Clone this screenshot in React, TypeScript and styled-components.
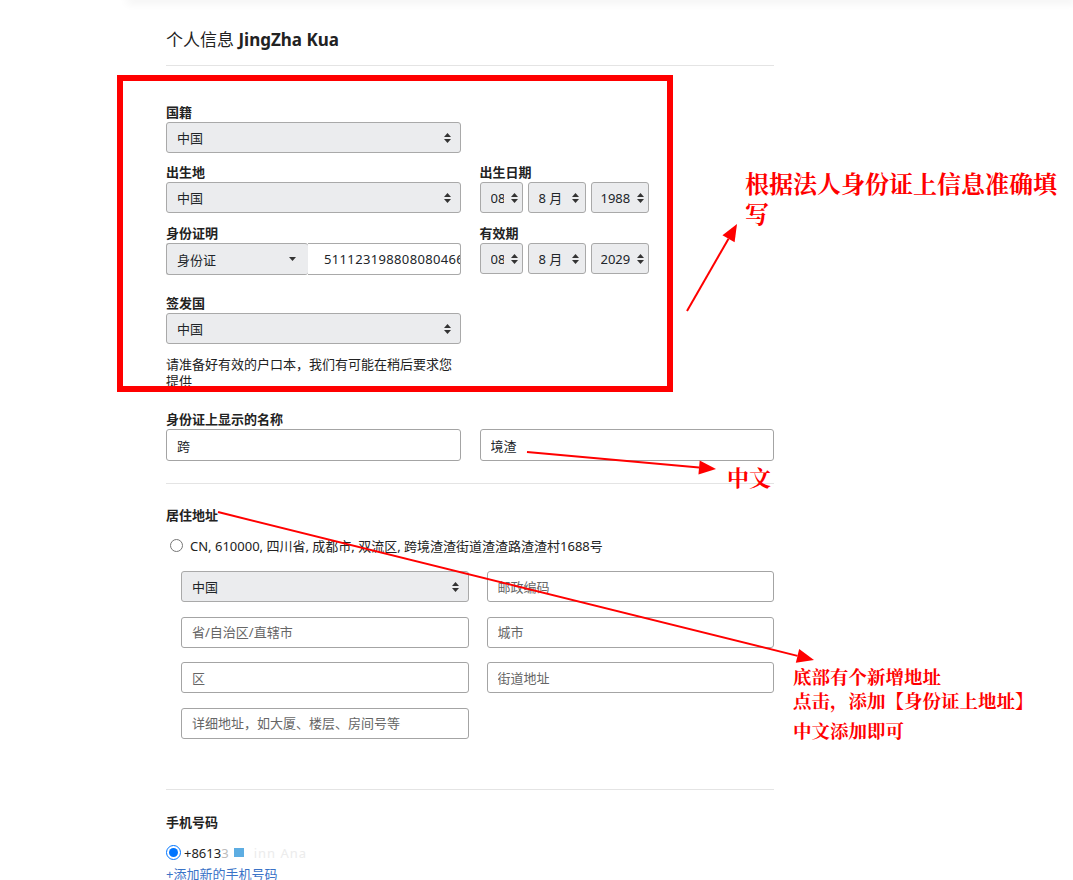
import React from "react";
import styled, { createGlobalStyle } from "styled-components";

const GlobalStyle = createGlobalStyle`
  body {
    margin: 0;
    background: #fff;
    color: #212529;
    font-family: "Noto Sans", "Noto Sans CJK SC", sans-serif;
    font-size: 13px;
  }
`;

const Page = styled.div`
  position: relative;
  width: 1073px;
  height: 880px;
  overflow: hidden;
`;

const TopShade = styled.div`
  height: 0;
  margin-left: 130px;
  box-shadow: 0 0 10px 3px rgba(0, 0, 0, 0.07);
`;

const Main = styled.main`
  width: 608px;
  margin-left: 166px;
`;

const Title = styled.h1`
  margin: 0;
  padding: 28px 0 13px;
  font-size: 17px;
  line-height: 24px;
  font-weight: 400;
  color: #222;
  border-bottom: 1px solid #e4e4e4;

  b {
    font-weight: 700;
  }
`;

const Section = styled.section<{ $top: number }>`
  padding-top: ${(p) => p.$top}px;
`;

const Row = styled.div<{ $gap?: number }>`
  display: grid;
  grid-template-columns: minmax(0, 1fr) minmax(0, 1fr);
  column-gap: 19px;
  margin-bottom: ${(p) => p.$gap ?? 0}px;
`;

const Field = styled.div`
  display: flex;
  flex-direction: column;
  min-width: 0;
`;

const Label = styled.label`
  display: block;
  font-weight: 700;
  line-height: 18px;
  margin-bottom: 1px;
  color: #222;
`;

const SelectWrap = styled.div<{ $w?: number }>`
  position: relative;
  width: ${(p) => (p.$w ? `${p.$w}px` : "100%")};
`;

const NativeSelect = styled.select<{ $pad?: number }>`
  appearance: none;
  width: 100%;
  height: 31px;
  box-sizing: border-box;
  border: 1px solid #a9a9a9;
  border-radius: 3px;
  background: #ebecee;
  padding: 0 18px 0 ${(p) => p.$pad ?? 10}px;
  font: inherit;
  color: #212529;
`;

const Caret = styled.svg<{ $right: number }>`
  position: absolute;
  right: ${(p) => p.$right}px;
  top: 50%;
  transform: translateY(-50%);
  pointer-events: none;
`;

const DateRow = styled.div`
  display: flex;
  gap: 5px;
`;

const Group = styled.div`
  display: flex;
  height: 32px;
`;

const GroupSelect = styled.div`
  position: relative;
  flex: 0 0 142px;
  box-sizing: border-box;
  border: 1px solid #a9a9a9;
  border-right: 0;
  border-radius: 3px;
  background: #ebecee;
  display: flex;
  align-items: center;
  padding-left: 10px;
`;

const GroupInput = styled.input`
  flex: 1 1 0;
  width: 0;
  min-width: 0;
  box-sizing: border-box;
  border: 1px solid #a9a9a9;
  border-left: 0;
  border-radius: 0 3px 3px 0;
  padding: 0 0 0 16px;
  font: inherit;
  letter-spacing: 0.35px;
  color: #212529;
  background: #fff;
`;

const Help = styled.p`
  width: 294px;
  margin: 12px 0 0;
  line-height: 17px;
  color: #222;
`;

const TextInput = styled.input`
  width: 100%;
  height: 32px;
  box-sizing: border-box;
  border: 1px solid #a4a4a4;
  border-radius: 3px;
  padding: 0 10px;
  font: inherit;
  color: #212529;
  background: #fff;

  &::placeholder {
    color: #666;
  }
`;

const Divider = styled.hr<{ $top: number }>`
  border: 0;
  border-top: 1px solid #e4e4e4;
  margin: ${(p) => p.$top}px 0 0;
`;

const RadioRow = styled.label<{ $top: number; $indent: number; $size?: number }>`
  display: flex;
  align-items: center;
  height: 20px;
  margin-top: ${(p) => p.$top}px;
  color: #222;

  input {
    margin: 0 ${(p) => (p.$indent > 2 ? 7 : 3)}px 0 ${(p) => p.$indent}px;
    width: ${(p) => p.$size ?? 13}px;
    height: ${(p) => p.$size ?? 13}px;
    accent-color: #0075ff;
  }
`;

const AddressGrid = styled.div`
  display: grid;
  grid-template-columns: minmax(0, 1fr) minmax(0, 1fr);
  column-gap: 18px;
  row-gap: 14.5px;
  margin-top: 16px;
  padding-left: 15px;

  input,
  select {
    height: 31px;
  }
`;

const Faded = styled.span`
  color: #bbb;
`;

const Blob = styled.span`
  display: inline-block;
  width: 10px;
  height: 9px;
  margin: 0 10px 0 5px;
  background: #5dade2;
  vertical-align: -1px;
`;

const Ghost = styled.span`
  color: #ececec;
  letter-spacing: 1px;
`;

const AddLink = styled.a`
  display: block;
  margin-top: 3px;
  line-height: 16px;
  color: #3a73c7;
  text-decoration: none;
`;

/* annotation layer painted over the form */
const Overlay = styled.div`
  position: absolute;
  inset: 0;
  pointer-events: none;
`;

const RedFrame = styled.div`
  position: absolute;
  left: 117px;
  top: 75px;
  width: 556px;
  height: 317px;
  box-sizing: border-box;
  border: 6px solid #ff0000;
`;

const Note = styled.div<{ $x: number; $y: number; $size: number; $lh: number; $w?: number }>`
  position: absolute;
  left: ${(p) => p.$x}px;
  top: ${(p) => p.$y}px;
  width: ${(p) => (p.$w ? `${p.$w}px` : "auto")};
  font-family: "Noto Serif CJK SC", "Noto Sans CJK SC", serif;
  font-size: ${(p) => p.$size}px;
  line-height: ${(p) => p.$lh}px;
  font-weight: 700;
  color: #ff0000;
  white-space: normal;
`;

const NoteLine = styled.div<{ $gap?: number }>`
  margin-top: ${(p) => p.$gap ?? 0}px;
  white-space: nowrap;
`;

const Arrows = styled.svg`
  position: absolute;
  inset: 0;
`;

const UpDown = ({ right = 10 }: { right?: number }) => (
  <Caret $right={right} width="7" height="10" viewBox="0 0 7 10">
    <path d="M3.5 0 L7 4 H0 Z M0 6 H7 L3.5 10 Z" fill="#333" />
  </Caret>
);

interface SelectProps {
  value: string;
  width?: number;
  pad?: number;
  caret?: number;
}

const Select = ({ value, width, pad, caret }: SelectProps) => (
  <SelectWrap $w={width}>
    <NativeSelect $pad={pad} defaultValue={value}>
      <option>{value}</option>
    </NativeSelect>
    <UpDown right={caret} />
  </SelectWrap>
);

const DatePick = ({ day, month, year }: { day: string; month: string; year: string }) => (
  <DateRow>
    <Select value={day} width={43} pad={10} caret={5} />
    <Select value={month} width={58} pad={10} caret={7} />
    <Select value={year} width={58} pad={9} caret={5} />
  </DateRow>
);

const arrow = (x1: number, y1: number, x2: number, y2: number) => {
  const a = Math.atan2(y2 - y1, x2 - x1);
  const len = 17;
  const half = 7;
  const bx = x2 - len * Math.cos(a);
  const by = y2 - len * Math.sin(a);
  const px = -Math.sin(a) * half;
  const py = Math.cos(a) * half;
  return (
    <g key={`${x1}-${y1}`}>
      <line x1={x1} y1={y1} x2={bx} y2={by} stroke="#ff0000" strokeWidth="2" />
      <polygon points={`${x2},${y2} ${bx + px},${by + py} ${bx - px},${by - py}`} fill="#ff0000" />
    </g>
  );
};

export default function App() {
  return (
    <Page>
      <GlobalStyle />
      <TopShade />
      <Main>
        <Title>
          个人信息 <b>JingZha Kua</b>
        </Title>

        <Section $top={37}>
          <Row $gap={10}>
            <Field>
              <Label>国籍</Label>
              <Select value="中国" />
            </Field>
          </Row>
          <Row $gap={11}>
            <Field>
              <Label>出生地</Label>
              <Select value="中国" />
            </Field>
            <Field>
              <Label>出生日期</Label>
              <DatePick day="08" month="8 月" year="1988" />
            </Field>
          </Row>
          <Row $gap={19}>
            <Field>
              <Label>身份证明</Label>
              <Group>
                <GroupSelect>
                  身份证
                  <Caret $right={12} width="7" height="4" viewBox="0 0 7 4">
                    <path d="M0 0 H7 L3.5 4 Z" fill="#333" />
                  </Caret>
                </GroupSelect>
                <GroupInput defaultValue="511123198808080466" />
              </Group>
            </Field>
            <Field>
              <Label>有效期</Label>
              <DatePick day="08" month="8 月" year="2029" />
            </Field>
          </Row>
          <Row>
            <Field>
              <Label>签发国</Label>
              <Select value="中国" />
            </Field>
          </Row>
          <Help>请准备好有效的户口本，我们有可能在稍后要求您提供</Help>
        </Section>

        <Section $top={20}>
          <Label>身份证上显示的名称</Label>
          <Row>
            <TextInput defaultValue="跨" />
            <TextInput defaultValue="境渣" />
          </Row>
        </Section>

        <Divider $top={22} />

        <Section $top={22}>
          <Label>居住地址</Label>
          <RadioRow $top={11} $indent={4}>
            <input type="radio" name="addr" />
            CN, 610000, 四川省, 成都市, 双流区, 跨境渣渣街道渣渣路渣渣村1688号
          </RadioRow>
          <AddressGrid>
            <Select value="中国" />
            <TextInput placeholder="邮政编码" />
            <TextInput placeholder="省/自治区/直辖市" />
            <TextInput placeholder="城市" />
            <TextInput placeholder="区" />
            <TextInput placeholder="街道地址" />
            <TextInput placeholder="详细地址，如大厦、楼层、房间号等" />
          </AddressGrid>
        </Section>

        <Divider $top={50} />

        <Section $top={23}>
          <Label>手机号码</Label>
          <RadioRow $top={12} $indent={0} $size={15}>
            <input type="radio" name="phone" defaultChecked />
            +8613<Faded>3</Faded>
            <Blob />
            <Ghost>inn Ana</Ghost>
          </RadioRow>
          <AddLink href="#">+添加新的手机号码</AddLink>
        </Section>
      </Main>

      <Overlay>
        <RedFrame />
        <Arrows width="1073" height="880" viewBox="0 0 1073 880">
          {arrow(687, 311, 737, 224)}
          {arrow(527, 452, 716, 469)}
          {arrow(218, 512, 814, 660)}
        </Arrows>
        <Note $x={745} $y={168} $size={24} $lh={30} $w={318}>
          根据法人身份证上信息准确填写
        </Note>
        <Note $x={727} $y={464} $size={22} $lh={26}>
          中文
        </Note>
        <Note $x={793} $y={664} $size={18.5} $lh={24}>
          <NoteLine>底部有个新增地址</NoteLine>
          <NoteLine>点击，添加【身份证上地址】</NoteLine>
          <NoteLine $gap={6}>中文添加即可</NoteLine>
        </Note>
      </Overlay>
    </Page>
  );
}
